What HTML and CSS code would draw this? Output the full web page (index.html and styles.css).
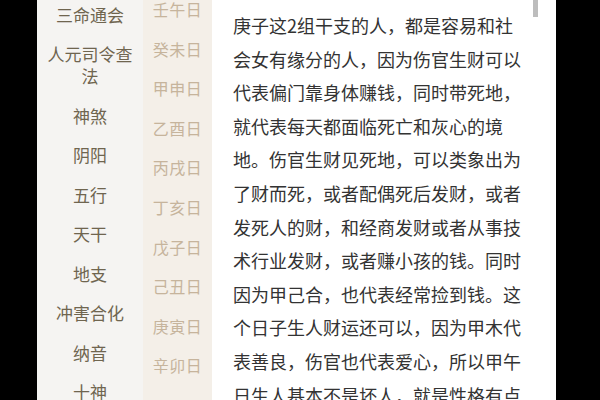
FILE: index.html
```html
<!DOCTYPE html>
<html lang="zh">
<head>
<meta charset="utf-8">
<link rel="stylesheet" href="styles.css">
</head>
<body>
<div class="screen">
  <div class="edge-left"></div>
  <nav class="menu">
    <div class="menu-list">
      <div class="menu-item">三命通会</div>
      <div class="menu-item">人元司令查法</div>
      <div class="menu-item">神煞</div>
      <div class="menu-item">阴阳</div>
      <div class="menu-item">五行</div>
      <div class="menu-item">天干</div>
      <div class="menu-item">地支</div>
      <div class="menu-item">冲害合化</div>
      <div class="menu-item">纳音</div>
      <div class="menu-item">十神</div>
    </div>
  </nav>
  <div class="days">
    <div class="day-list">
      <div class="day">壬午日</div>
      <div class="day">癸未日</div>
      <div class="day">甲申日</div>
      <div class="day">乙酉日</div>
      <div class="day">丙戌日</div>
      <div class="day">丁亥日</div>
      <div class="day">戊子日</div>
      <div class="day">己丑日</div>
      <div class="day">庚寅日</div>
      <div class="day">辛卯日</div>
    </div>
  </div>
  <main class="content">
    <p class="article">庚子这2组干支的人，都是容易和社会女有缘分的人，因为伤官生财可以代表偏门靠身体赚钱，同时带死地，就代表每天都面临死亡和灰心的境地。伤官生财见死地，可以类象出为了财而死，或者配偶死后发财，或者发死人的财，和经商发财或者从事技术行业发财，或者赚小孩的钱。同时因为甲己合，也代表经常捡到钱。这个日子生人财运还可以，因为甲木代表善良，伤官也代表爱心，所以甲午日生人基本不是坏人，就是性格有点</p>
    <div class="scroll-thumb"></div>
  </main>
  <div class="edge-right"></div>
</div>
</body>
</html>
```
FILE: styles.css
```css
html, body {
  margin: 0;
  padding: 0;
  background: #000;
}
.screen {
  display: flex;
  width: 600px;
  height: 400px;
  overflow: hidden;
  background: #000;
  font-family: "Noto Sans CJK SC", "Noto Sans", sans-serif;
}
.edge-left {
  width: 37px;
  flex: none;
  background: #000;
}
.menu {
  width: 106px;
  flex: none;
  background: #f5f4f2;
  overflow: hidden;
}
.menu-list {
  margin-top: -5px;
}
.menu-item {
  padding: 8.75px 6px;
  line-height: 22px;
  font-size: 17px;
  color: #6f654f;
  text-align: center;
}
.days {
  width: 69px;
  flex: none;
  background: #f4efe8;
  overflow: hidden;
}
.day-list {
  margin-top: -10px;
}
.day {
  height: 39.6px;
  line-height: 39.6px;
  font-size: 16px;
  color: #c6b49c;
  text-align: center;
  letter-spacing: 0.5px;
}
.content {
  position: relative;
  width: 344px;
  flex: none;
  background: #fff;
  overflow: hidden;
}
.article {
  margin: 0;
  padding: 9px 0 0 21px;
  width: 290px;
  font-size: 18px;
  line-height: 33.6px;
  color: #333;
}
.scroll-thumb {
  position: absolute;
  top: 0;
  right: 18px;
  width: 5px;
  height: 17px;
  background: #bdbdbd;
}
.edge-right {
  flex: 1;
  background: #000;
}
```
